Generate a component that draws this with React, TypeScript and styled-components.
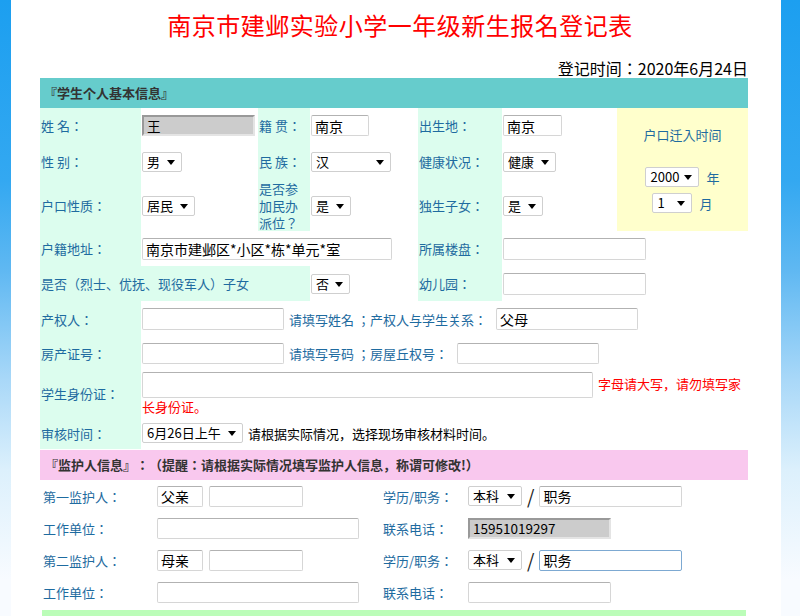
import React from 'react';
import styled, { createGlobalStyle } from 'styled-components';

const GlobalStyle = createGlobalStyle`
  html {
    background: #fafcff linear-gradient(to bottom, #1c9ff0 0px, #33a8f1 180px, #5fb8f2 270px, #a9d8f8 380px, #dcf0fc 470px, #f8fbff 580px) no-repeat;
    background-size: 100% 616px;
  }
  body {
    margin: 0;
    font-family: "Noto Sans CJK JP", "Noto Sans CJK SC", "Noto Sans", sans-serif;
    text-spacing-trim: space-all;
  }
`;

const Sheet = styled.div`
  width: 770px;
  min-height: 616px;
  margin-left: 11px;
  box-sizing: border-box;
  padding: 0 33px 0 29px;
  background: #fff;
`;

const Title = styled.h1`
  margin: 0;
  padding: 8px 0 0 12px;
  font-size: 24px;
  line-height: 34px;
  font-weight: normal;
  letter-spacing: 0.5px;
  text-align: center;
  color: #ff0000;
`;

const DateLine = styled.div`
  margin-top: 16px;
  font-size: 16px;
  line-height: 20px;
  text-align: right;
  color: #000;
`;

const Banner = styled.div<{ $bg: string; $pad?: number }>`
  height: 30px;
  line-height: 30px;
  padding-left: ${p => p.$pad ?? 4}px;
  background: ${p => p.$bg};
  font-size: 13px;
  font-weight: bold;
  color: #333;
`;

const FormTable = styled.table`
  width: 708px;
  table-layout: fixed;
  border-collapse: collapse;
  border-spacing: 0;
`;

const Col = styled.col<{ $w: number }>`
  width: ${p => p.$w}px;
`;

const Row = styled.tr<{ $h: number }>`
  height: ${p => p.$h}px;
`;

const Cell = styled.td<{ $tone?: 'mint' | 'cream'; $pad?: number }>`
  padding: 0 ${p => p.$pad ?? 1}px;
  background: ${p => (p.$tone === 'mint' ? '#dcfdee' : p.$tone === 'cream' ? '#ffffcc' : 'transparent')};
  color: #1e6ba0;
  font-size: 13px;
  line-height: 17px;
  vertical-align: middle;
`;

const Field = styled.input<{ $w: number; $h?: number; $locked?: boolean; $focused?: boolean }>`
  box-sizing: border-box;
  width: ${p => p.$w}px;
  height: ${p => p.$h ?? 22}px;
  margin: 0;
  padding: 0 3px;
  vertical-align: middle;
  font-family: inherit;
  font-size: ${p => (p.$locked ? 13.5 : 14)}px;
  color: #000;
  outline: none;
  border-radius: ${p => (p.$locked ? 0 : 2)}px;
  background: ${p => (p.$locked ? '#cccccc' : '#fff')};
  border: ${p => (p.$locked ? '2px solid' : '1px solid')};
  border-color: ${p =>
    p.$locked ? '#999 #e4e4e4 #e4e4e4 #999' : p.$focused ? '#7da9d2' : '#b2b2b2 #d6d6d6 #d6d6d6 #d6d6d6'};
`;

const SelectBox = styled.span<{ $w: number }>`
  position: relative;
  display: inline-block;
  width: ${p => p.$w}px;
  height: 20px;
  vertical-align: middle;

  &::after {
    content: '';
    position: absolute;
    right: 7px;
    top: 8px;
    border-left: 4px solid transparent;
    border-right: 4px solid transparent;
    border-top: 5px solid #000;
    pointer-events: none;
  }
`;

const Select = styled.select`
  appearance: none;
  box-sizing: border-box;
  width: 100%;
  height: 100%;
  margin: 0;
  padding: 0 0 0 4px;
  border: 1px solid #cfcfcf;
  border-radius: 2px;
  background: #fff;
  font-family: inherit;
  font-size: 13px;
  line-height: 18px;
  color: #000;
  outline: none;
`;

const Hint = styled.span<{ $dark?: boolean }>`
  margin: 0 ${p => (p.$dark ? 5 : 9)}px 0 5px;
  vertical-align: middle;
  color: ${p => (p.$dark ? '#000' : '#1e6ba0')};
`;

const Warn = styled.span`
  margin-left: 5px;
  color: #ff0000;
`;

const MoveIn = styled.div`
  display: flex;
  flex-direction: column;
  align-items: center;
  color: #1e6ba0;
`;

const MoveCaption = styled.div`
  margin-bottom: 24px;
  font-size: 13px;
`;

const MoveLine = styled.div`
  display: flex;
  align-items: center;
  gap: 7px;
  margin-bottom: 6px;
  &:last-child {
    margin-bottom: 0;
  }
`;

const Slash = styled.span`
  display: inline-block;
  margin: 0 5px;
  font-size: 19px;
  line-height: 20px;
  color: #222;
  vertical-align: middle;
`;

const Gap = styled.span`
  display: inline-block;
  width: 6px;
`;

const Spacer = styled.div<{ $h: number }>`
  height: ${p => p.$h}px;
`;

const NextBar = styled.div`
  height: 6px;
  margin: 2px 2px 0;
  background: #bbfdb8;
`;

const Dropdown: React.FC<{ w: number; value: string; options?: string[] }> = ({ w, value, options }) => (
  <SelectBox $w={w}>
    <Select defaultValue={value}>
      {(options ?? [value]).map(o => (
        <option key={o} value={o}>
          {o}
        </option>
      ))}
    </Select>
  </SelectBox>
);

const studentCols = [101, 117, 52, 108, 84, 115, 131];
const guardianCols = [117, 226, 85, 280];

const Guardian: React.FC<{ order: string; relation: string; focused?: boolean; phone?: string }> = ({
  order,
  relation,
  focused,
  phone,
}) => (
  <>
    <Row $h={32}>
      <Cell $pad={3}>{order}监护人：</Cell>
      <Cell $pad={0}>
        <Field $w={46} $h={21} defaultValue={relation} />
        <Gap />
        <Field $w={94} $h={21} />
      </Cell>
      <Cell $pad={0}>学历/职务：</Cell>
      <Cell $pad={0}>
        <Dropdown w={54} value="本科" options={['本科', '大专', '高中', '研究生']} />
        <Slash>/</Slash>
        <Field $w={143} $h={21} $focused={focused} defaultValue="职务" />
      </Cell>
    </Row>
    <Row $h={32}>
      <Cell $pad={3}>工作单位：</Cell>
      <Cell $pad={0}>
        <Field $w={202} $h={21} />
      </Cell>
      <Cell $pad={0}>联系电话：</Cell>
      <Cell $pad={0}>
        {phone ? <Field $w={143} $h={21} $locked readOnly defaultValue={phone} /> : <Field $w={143} $h={21} />}
      </Cell>
    </Row>
  </>
);

const App: React.FC = () => {
  return (
    <>
      <GlobalStyle />
      <Sheet>
        <Title>南京市建邺实验小学一年级新生报名登记表</Title>
        <DateLine>登记时间：2020年6月24日</DateLine>
        <Banner $bg="#66cccc">『学生个人基本信息』</Banner>
        <FormTable>
          <colgroup>
            {studentCols.map((w, i) => (
              <Col key={i} $w={w} />
            ))}
          </colgroup>
          <tbody>
            <Row $h={35}>
              <Cell $tone="mint">姓 名：</Cell>
              <Cell>
                <Field $w={113} $h={21} $locked readOnly defaultValue="王" />
              </Cell>
              <Cell $tone="mint">籍 贯：</Cell>
              <Cell>
                <Field $w={58} $h={21} defaultValue="南京" />
              </Cell>
              <Cell $tone="mint">出生地：</Cell>
              <Cell>
                <Field $w={59} $h={21} defaultValue="南京" />
              </Cell>
              <Cell $tone="cream" rowSpan={3}>
                <MoveIn>
                  <MoveCaption>户口迁入时间</MoveCaption>
                  <MoveLine>
                    <Dropdown w={54} value="2000" />
                    <span>年</span>
                  </MoveLine>
                  <MoveLine>
                    <Dropdown w={40} value="1" />
                    <span>月</span>
                  </MoveLine>
                </MoveIn>
              </Cell>
            </Row>
            <Row $h={37}>
              <Cell $tone="mint">性 别：</Cell>
              <Cell>
                <Dropdown w={40} value="男" options={['男', '女']} />
              </Cell>
              <Cell $tone="mint">民 族：</Cell>
              <Cell>
                <Dropdown w={80} value="汉" />
              </Cell>
              <Cell $tone="mint">健康状况：</Cell>
              <Cell>
                <Dropdown w={53} value="健康" />
              </Cell>
            </Row>
            <Row $h={51}>
              <Cell $tone="mint">户口性质：</Cell>
              <Cell>
                <Dropdown w={53} value="居民" />
              </Cell>
              <Cell $tone="mint">是否参加民办派位？</Cell>
              <Cell>
                <Dropdown w={40} value="是" options={['是', '否']} />
              </Cell>
              <Cell $tone="mint">独生子女：</Cell>
              <Cell>
                <Dropdown w={40} value="是" options={['是', '否']} />
              </Cell>
            </Row>
            <Row $h={35}>
              <Cell $tone="mint">户籍地址：</Cell>
              <Cell colSpan={3}>
                <Field $w={250} defaultValue="南京市建邺区*小区*栋*单元*室" />
              </Cell>
              <Cell $tone="mint">所属楼盘：</Cell>
              <Cell colSpan={2}>
                <Field $w={143} />
              </Cell>
            </Row>
            <Row $h={35}>
              <Cell $tone="mint" colSpan={3}>
                是否（烈士、优抚、现役军人）子女
              </Cell>
              <Cell>
                <Dropdown w={39} value="否" options={['否', '是']} />
              </Cell>
              <Cell $tone="mint">幼儿园：</Cell>
              <Cell colSpan={2}>
                <Field $w={143} />
              </Cell>
            </Row>
            <Row $h={36}>
              <Cell $tone="mint">产权人：</Cell>
              <Cell colSpan={6}>
                <Field $w={142} />
                <Hint>请填写姓名 ；产权人与学生关系：</Hint>
                <Field $w={142} defaultValue="父母" />
              </Cell>
            </Row>
            <Row $h={33}>
              <Cell $tone="mint">房产证号：</Cell>
              <Cell colSpan={6}>
                <Field $w={142} $h={21} />
                <Hint>请填写号码 ；房屋丘权号：</Hint>
                <Field $w={142} $h={21} />
              </Cell>
            </Row>
            <Row $h={47}>
              <Cell $tone="mint">学生身份证：</Cell>
              <Cell colSpan={6}>
                <Field $w={451} $h={26} />
                <Warn>字母请大写，请勿填写家长身份证。</Warn>
              </Cell>
            </Row>
            <Row $h={32}>
              <Cell $tone="mint">审核时间：</Cell>
              <Cell colSpan={6}>
                <Dropdown w={101} value="6月26日上午" options={['6月26日上午', '6月26日下午', '6月27日上午']} />
                <Hint $dark>请根据实际情况，选择现场审核材料时间。</Hint>
              </Cell>
            </Row>
          </tbody>
        </FormTable>
        <Spacer $h={1} />
        <Banner $bg="#f9c8ee" $pad={5}>
          『监护人信息』：（提醒：请根据实际情况填写监护人信息，称谓可修改!）
        </Banner>
        <FormTable>
          <colgroup>
            {guardianCols.map((w, i) => (
              <Col key={i} $w={w} />
            ))}
          </colgroup>
          <tbody>
            <Guardian order="第一" relation="父亲" phone="15951019297" />
            <Guardian order="第二" relation="母亲" focused />
          </tbody>
        </FormTable>
        <NextBar />
      </Sheet>
    </>
  );
};

export default App;
